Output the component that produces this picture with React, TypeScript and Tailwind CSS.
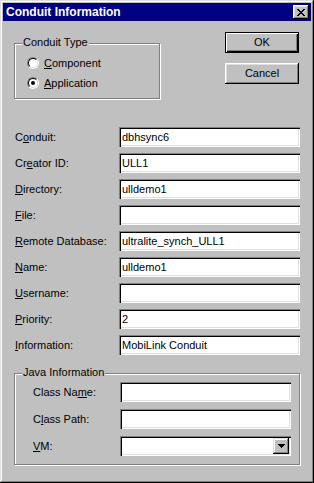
import React from "react";

const font = { fontFamily: '"Liberation Sans", Arial, sans-serif' };

// underlines the access key letter at index k
function Label({ text, k, className = "" }: { text: string; k: number; className?: string }) {
  return (
    <span className={"shrink-0 text-[11px] leading-none text-black " + className}>
      {text.slice(0, k)}
      <span className="underline underline-offset-[1px]">{text[k]}</span>
      {text.slice(k + 1)}
    </span>
  );
}

function Field({ value = "", className = "", children }: { value?: string; className?: string; children?: React.ReactNode }) {
  return (
    <div
      className={
        "h-5 flex items-center bg-white shadow-[inset_1px_1px_#808080,inset_2px_2px_#000,inset_-1px_-1px_#fff,inset_-2px_-2px_#dfdfdf] " +
        className
      }
    >
      <span className="pl-[3px] text-[11px] leading-none text-black flex-1">{value}</span>
      {children}
    </div>
  );
}

function Radio({ checked }: { checked?: boolean }) {
  return (
    <div className="w-3 h-3 rounded-full border border-t-[#808080] border-l-[#808080] border-b-white border-r-white">
      <div className="w-full h-full rounded-full border border-t-black border-l-black border-b-[#dfdfdf] border-r-[#dfdfdf] bg-white flex items-center justify-center">
        {checked && <div className="w-1 h-1 rounded-full bg-black" />}
      </div>
    </div>
  );
}

function GroupBox({ title, className = "", children }: { title: string; className?: string; children: React.ReactNode }) {
  return (
    <div className={"relative border border-[#808080] shadow-[inset_1px_1px_#fff,1px_1px_#fff] " + className}>
      <span className="absolute -top-[7px] left-[7px] px-[1px] bg-[#c0c0c0] text-[11px] leading-none text-black">
        {title}
      </span>
      {children}
    </div>
  );
}

const rows: { label: string; k: number; value: string }[] = [
  { label: "Conduit:", k: 1, value: "dbhsync6" },
  { label: "Creator ID:", k: 2, value: "ULL1" },
  { label: "Directory:", k: 0, value: "ulldemo1" },
  { label: "File:", k: 0, value: "" },
  { label: "Remote Database:", k: 0, value: "ultralite_synch_ULL1" },
  { label: "Name:", k: 0, value: "ulldemo1" },
  { label: "Username:", k: 0, value: "" },
  { label: "Priority:", k: 0, value: "2" },
  { label: "Information:", k: 0, value: "MobiLink Conduit" },
];

export default function App() {
  return (
    <div
      style={font}
      className="w-[314px] h-[483px] bg-[#c0c0c0] p-[3px] flex flex-col shadow-[inset_-1px_-1px_#000,inset_1px_1px_#dfdfdf,inset_-2px_-2px_#808080,inset_2px_2px_#fff]"
    >
      {/* title bar */}
      <div className="h-[18px] bg-[#000080] flex items-center justify-between pl-[3px] pr-[2px]">
        <span className="text-white font-bold text-[12px] leading-none">Conduit Information</span>
        <div className="w-4 h-[14px] bg-[#c0c0c0] flex items-center justify-center shadow-[inset_-1px_-1px_#000,inset_1px_1px_#fff,inset_-2px_-2px_#808080,inset_2px_2px_#dfdfdf]">
          <svg width="8" height="7" viewBox="0 0 8 7" shapeRendering="crispEdges">
            <path d="M0 0h2v1h-2zM6 0h2v1h-2zM1 1h2v1h-2zM5 1h2v1h-2zM2 2h4v1h-4zM3 3h2v1h-2zM2 4h4v1h-4zM1 5h2v1h-2zM5 5h2v1h-2zM0 6h2v1h-2zM6 6h2v1h-2z" fill="#000" />
          </svg>
        </div>
      </div>

      {/* top section */}
      <div className="flex mt-[11px]">
        <GroupBox title="Conduit Type" className="ml-[11px] mt-[11px] w-[146px] h-[56px]">
          <div className="flex flex-col gap-2 pl-[12px] pt-[13px]">
            <div className="flex items-center gap-[5px]">
              <Radio />
              <Label text="Component" k={0} />
            </div>
            <div className="flex items-center gap-[5px]">
              <Radio checked />
              <Label text="Application" k={0} />
            </div>
          </div>
        </GroupBox>
        <div className="ml-[65px] flex flex-col gap-[10px]">
          <button className="w-[74px] h-[21px] bg-[#c0c0c0] border border-black shadow-[inset_1px_1px_#fff,inset_-1px_-1px_#000,inset_-2px_-2px_#808080] text-[11px] text-black">
            OK
          </button>
          <button className="w-[74px] h-[21px] bg-[#c0c0c0] shadow-[inset_-1px_-1px_#000,inset_1px_1px_#fff,inset_-2px_-2px_#808080,inset_2px_2px_#dfdfdf] text-[11px] text-black">
            Cancel
          </button>
        </div>
      </div>

      {/* main fields */}
      <div className="mt-[28px] flex flex-col gap-[6px]">
        {rows.map((r) => (
          <div key={r.label} className="flex items-center">
            <Label text={r.label} k={r.k} className="w-[116px] pl-[12px]" />
            <Field value={r.value} className="w-[181px]" />
          </div>
        ))}
      </div>

      {/* java information */}
      <GroupBox title="Java Information" className="ml-[11px] mt-[18px] w-[286px] h-[92px]">
        <div className="flex flex-col gap-[7px] pt-[8px]">
          <div className="flex items-center">
            <Label text="Class Name:" k={8} className="w-[105px] pl-[18px]" />
            <Field className="w-[171px]" />
          </div>
          <div className="flex items-center">
            <Label text="Class Path:" k={1} className="w-[105px] pl-[18px]" />
            <Field className="w-[171px]" />
          </div>
          <div className="flex items-center">
            <Label text="VM:" k={0} className="w-[105px] pl-[18px]" />
            <Field className="w-[171px] pr-[2px]">
              <div className="w-4 h-4 bg-[#c0c0c0] flex items-center justify-center shadow-[inset_-1px_-1px_#000,inset_1px_1px_#dfdfdf,inset_-2px_-2px_#808080,inset_2px_2px_#fff]">
                <svg width="7" height="4" viewBox="0 0 7 4" shapeRendering="crispEdges">
                  <path d="M0 0h7v1h-7zM1 1h5v1h-5zM2 2h3v1h-3zM3 3h1v1h-1z" fill="#000" />
                </svg>
              </div>
            </Field>
          </div>
        </div>
      </GroupBox>
    </div>
  );
}
